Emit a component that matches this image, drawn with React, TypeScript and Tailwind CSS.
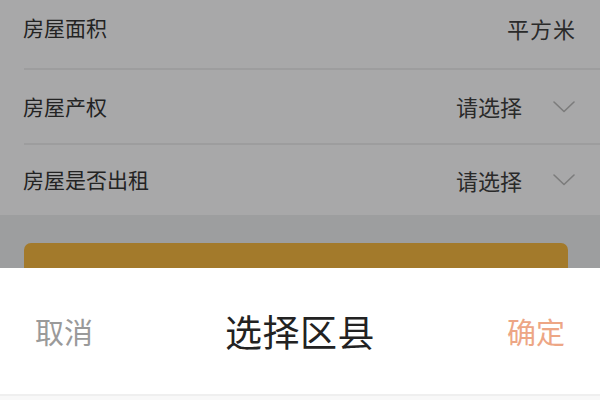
import React from "react";

const Chevron = () => (
  <svg width="24" height="14" viewBox="0 0 24 14" fill="none" className="ml-[30px]">
    <path d="M2 2 L12 11.5 L22 2" stroke="#7c7c7c" strokeWidth="1.6" strokeLinecap="round" strokeLinejoin="round" />
  </svg>
);

export default function App() {
  const font = { fontFamily: '"Noto Sans CJK SC", "Noto Sans", sans-serif' };
  return (
    <div className="w-[600px] h-[400px] overflow-hidden flex flex-col bg-white" style={font}>
      <div className="bg-[#a8a8a9] flex flex-col">
        <div className="h-[68px] pb-[12px] pl-[23px] pr-[24px] flex items-center justify-between">
          <span className="text-[21px] text-[#232323]">房屋面积</span>
          <span className="text-[22px] text-[#2a2a2a] tracking-[1px]">平方米</span>
        </div>
        <div className="ml-[24px] h-[2px] bg-[#9d9d9e]" />
        <div className="h-[73px] pl-[23px] pr-[24px] flex items-center justify-between">
          <span className="text-[21px] text-[#232323]">房屋产权</span>
          <div className="flex items-center">
            <span className="text-[22px] text-[#2a2a2a]">请选择</span>
            <Chevron />
          </div>
        </div>
        <div className="ml-[24px] h-[2px] bg-[#9d9d9e]" />
        <div className="h-[70px] pl-[23px] pr-[24px] flex items-center justify-between">
          <span className="text-[21px] text-[#232323]">房屋是否出租</span>
          <div className="flex items-center">
            <span className="text-[22px] text-[#2a2a2a]">请选择</span>
            <Chevron />
          </div>
        </div>
      </div>
      <div className="h-[53px] bg-[#9d9e9f] flex flex-col justify-end px-[24px] pr-[32px]">
        <div className="h-[25px] bg-[#a37a2b] rounded-t-[7px]" />
      </div>
      <div className="bg-white h-[126px] flex items-center justify-between pl-[35px] pr-[35px]">
        <span className="text-[29px] text-[#9a9a9a] leading-none">取消</span>
        <span className="text-[37px] text-[#222222] leading-none tracking-[0.5px]">选择区县</span>
        <span className="text-[29px] text-[#eda685] leading-none">确定</span>
      </div>
      <div className="h-[2px] bg-[#efefef]" />
      <div className="flex-1 bg-[#f8f8f8]" />
    </div>
  );
}
